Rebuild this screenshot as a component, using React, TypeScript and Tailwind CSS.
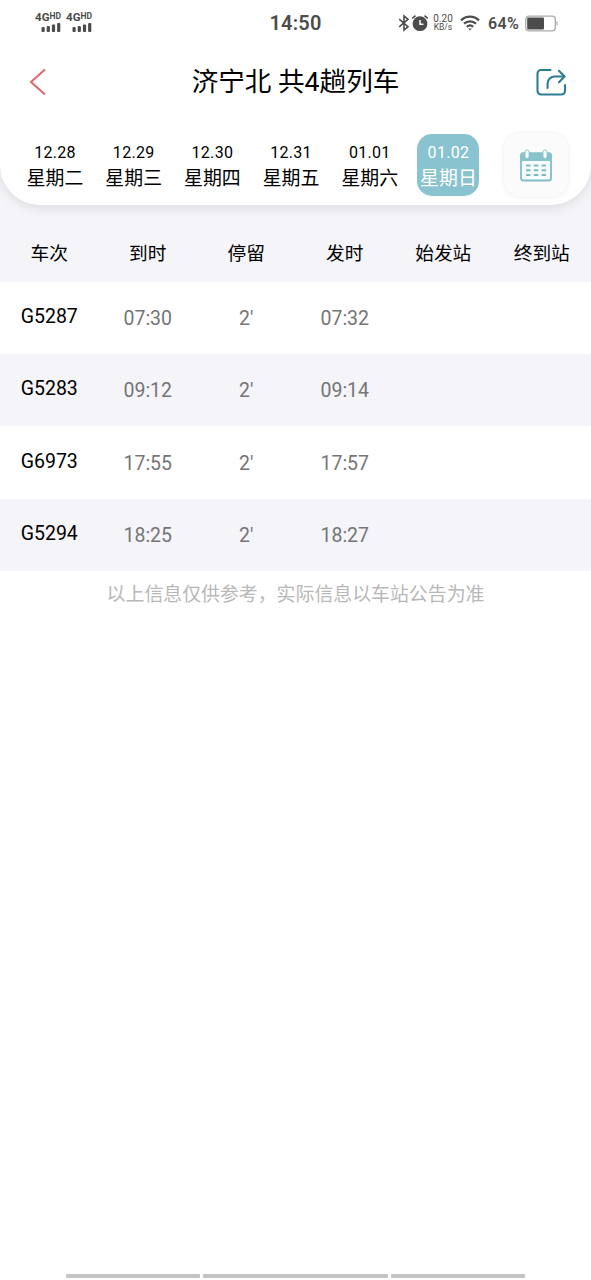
import clsx from 'clsx';

interface Day {
  date: string;
  weekday: string;
}

interface Train {
  code: string;
  arrive: string;
  stop: string;
  depart: string;
}

const days: Day[] = [
  { date: '12.28', weekday: '星期二' },
  { date: '12.29', weekday: '星期三' },
  { date: '12.30', weekday: '星期四' },
  { date: '12.31', weekday: '星期五' },
  { date: '01.01', weekday: '星期六' },
  { date: '01.02', weekday: '星期日' },
];

const selectedDate = '01.02';

const columns = ['车次', '到时', '停留', '发时', '始发站', '终到站'];

const trains: Train[] = [
  { code: 'G5287', arrive: '07:30', stop: "2'", depart: '07:32' },
  { code: 'G5283', arrive: '09:12', stop: "2'", depart: '09:14' },
  { code: 'G6973', arrive: '17:55', stop: "2'", depart: '17:57' },
  { code: 'G5294', arrive: '18:25', stop: "2'", depart: '18:27' },
];

function Signal() {
  return (
    <div className="flex w-[27px] flex-col items-end">
      <div className="flex items-start font-bold leading-none">
        <span className="text-[11.5px] leading-[11px]">4G</span>
        <span className="text-[8.5px] leading-[8px]">HD</span>
      </div>
      <svg width="20" height="9" viewBox="0 0 20 9" fill="#4c4c4c">
        <rect x="0.5" y="4" width="3.2" height="5" rx="1" />
        <rect x="5.7" y="3" width="3.2" height="6" rx="1" />
        <rect x="10.9" y="1.5" width="3.2" height="7.5" rx="1" />
        <rect x="16.1" y="0" width="3.2" height="9" rx="1" />
      </svg>
    </div>
  );
}

function BluetoothIcon() {
  return (
    <svg width="12" height="18" viewBox="0 0 12 18" fill="none" stroke="#4c4c4c" strokeWidth="1.6">
      <path d="M1.2 5.2 10 12.7 6 16V2L10 5.3 1.2 12.8" />
    </svg>
  );
}

function AlarmIcon() {
  return (
    <svg className="ml-px" width="18" height="18" viewBox="0 0 18 18" fill="none">
      <circle cx="9" cy="9.7" r="7.4" fill="#4c4c4c" />
      <path d="M1.2 4.4 4.5 1.6M16.8 4.4 13.5 1.6" stroke="#4c4c4c" strokeWidth="1.6" />
      <path d="M9 6v4.2h3.4" stroke="#fff" strokeWidth="1.5" />
    </svg>
  );
}

function WifiIcon() {
  return (
    <svg width="20" height="16" viewBox="0 0 20 16" fill="none" stroke="#4c4c4c" strokeWidth="2.3">
      <path d="M1 5.3C6.2.4 13.8.4 19 5.3" />
      <path d="M4 8.7c3.5-3.2 8.5-3.2 12 0" />
      <path d="M6.9 11.8c1.8-1.6 4.4-1.6 6.2 0" />
      <path d="M8.2 13.4h3.6L10 15.6z" fill="#4c4c4c" stroke="none" />
    </svg>
  );
}

function StatusBar() {
  return (
    <div className="grid h-[46px] grid-cols-[1fr_auto_1fr] items-center text-[#4c4c4c]">
      <div className="flex gap-[4px] pl-[34px] pb-[2px]">
        <Signal />
        <Signal />
      </div>
      <span className="text-[20px] font-semibold tracking-[0.2px]">14:50</span>
      <div className="flex items-center justify-end pr-[33px]">
        <BluetoothIcon />
        <AlarmIcon />
        <div className="ml-[4px] flex w-[20px] flex-col items-center leading-[9px]">
          <span className="text-[10px]">0.20</span>
          <span className="text-[8.5px]">KB/s</span>
        </div>
        <div className="ml-[7px]">
          <WifiIcon />
        </div>
        <span className="ml-[8px] pt-px text-[16px] font-semibold tracking-[0.3px]">64%</span>
        <svg className="ml-[6px]" width="33" height="17" viewBox="0 0 33 17" fill="none">
          <rect x="0.8" y="1.2" width="29.5" height="14.6" rx="3" stroke="#aaa" strokeWidth="1.3" />
          <rect x="2.2" y="2.6" width="16.8" height="11.8" rx="1" fill="#4c4c4c" />
          <path d="M32 6.5v4" stroke="#aaa" strokeWidth="1.2" />
        </svg>
      </div>
    </div>
  );
}

function TitleBar() {
  return (
    <div className="flex h-[71px] items-center justify-between pl-[29px] pr-[24px]">
      <svg width="31" height="28" viewBox="0 0 31 28" fill="none" stroke="#dc6a6c" strokeWidth="2.1">
        <path d="M16 1.5 2 14 16 26.5" />
      </svg>
      <h1 className="-ml-[4px] text-[26.6px] leading-[36px] text-black">济宁北 共4趟列车</h1>
      <svg
        width="32"
        height="28"
        viewBox="0 0 32 28"
        fill="none"
        stroke="#2f7c96"
        strokeWidth="2.1"
        strokeLinecap="round"
        strokeLinejoin="round"
      >
        <path d="M15.5 2H6a3.5 3.5 0 0 0-3.5 3.5v17.5A3.5 3.5 0 0 0 6 26.5h20.5A3.5 3.5 0 0 0 30 23v-6" />
        <path d="M12.6 20v-4.5a7 7 0 0 1 7-7H29" />
        <path d="M24 2.8 29.6 8.5 24 14.2" />
      </svg>
    </div>
  );
}

function CalendarButton() {
  return (
    <button className="ml-auto flex h-[64px] w-[64px] items-center justify-center rounded-[16px] bg-[#fbfbfb] shadow-[0_0_4px_rgba(0,0,0,0.08)]">
      <svg width="32" height="33" viewBox="0 0 32 33" fill="none">
        <rect x="1" y="4.5" width="30" height="27" rx="2" fill="#f6fcfc" stroke="#84bcc7" strokeWidth="1.8" />
        <path d="M0.5 12V5.5a2 2 0 0 1 2-2h27a2 2 0 0 1 2 2V12z" fill="#88c2cd" />
        <rect x="5" y="1" width="4" height="8.5" rx="2" fill="#fff" stroke="#88c2cd" strokeWidth="0.9" />
        <rect x="23" y="1" width="4" height="8.5" rx="2" fill="#fff" stroke="#88c2cd" strokeWidth="0.9" />
        <path
          d="M6 16.5h4.5M13.8 16.5h4.5M21.6 16.5h4.5M6 21.2h4.5M13.8 21.2h4.5M21.6 21.2h4.5M6 26h4.5M13.8 26h4.5M21.6 26h4.5"
          stroke="#7fb8c2"
          strokeWidth="2"
        />
      </svg>
    </button>
  );
}

function DayStrip() {
  return (
    <div className="flex items-center pl-[24px] pr-[23.5px] pt-[16px]">
      <div className="flex gap-[16.7px]">
        {days.map((day) => (
          <button
            key={day.date}
            className={clsx(
              'flex h-[62px] w-[62px] flex-col items-center justify-center rounded-[15px] pt-[3px]',
              day.date === selectedDate ? 'bg-[#89c3cf] text-white' : 'text-black'
            )}
          >
            <span className="text-[16px] leading-[22px] tracking-[0.3px]">{day.date}</span>
            <span className="whitespace-nowrap pt-px text-[18.9px] leading-[27px]">{day.weekday}</span>
          </button>
        ))}
      </div>
      <CalendarButton />
    </div>
  );
}

export default function App() {
  return (
    <div className="flex h-[1280px] w-[591px] flex-col bg-white font-[Roboto,'Noto_Sans_CJK_SC',sans-serif]">
      <div className="bg-[#f4f4f9]">
        <header className="h-[205px] rounded-b-[40px] bg-white shadow-[0_3px_12px_rgba(0,0,0,0.1)]">
          <StatusBar />
          <TitleBar />
          <DayStrip />
        </header>
        <div className="grid h-[76.5px] grid-cols-6 items-center pt-[21px] text-center text-[18.7px] text-black">
          {columns.map((column) => (
            <span key={column}>{column}</span>
          ))}
        </div>
      </div>

      {trains.map((train) => (
        <div
          key={train.code}
          className="grid h-[72.4px] grid-cols-6 items-center pt-[2px] text-center text-[19.5px] text-[#757575] odd:bg-[#f4f4f9]"
        >
          <span className="pb-[4px] text-black">{train.code}</span>
          <span>{train.arrive}</span>
          <span>{train.stop}</span>
          <span>{train.depart}</span>
        </div>
      ))}

      <p className="pt-[10px] text-center text-[18.9px] leading-[28px] text-[#b8b8b8]">
        以上信息仅供参考，实际信息以车站公告为准
      </p>

      <div className="mt-auto flex justify-center gap-[3px] pb-[2px]">
        <div className="h-[4px] w-[134px] rounded-[1px] bg-[#c4c4c4]" />
        <div className="h-[4px] w-[185px] rounded-[1px] bg-[#c4c4c4]" />
        <div className="h-[4px] w-[134px] rounded-[1px] bg-[#c4c4c4]" />
      </div>
    </div>
  );
}
